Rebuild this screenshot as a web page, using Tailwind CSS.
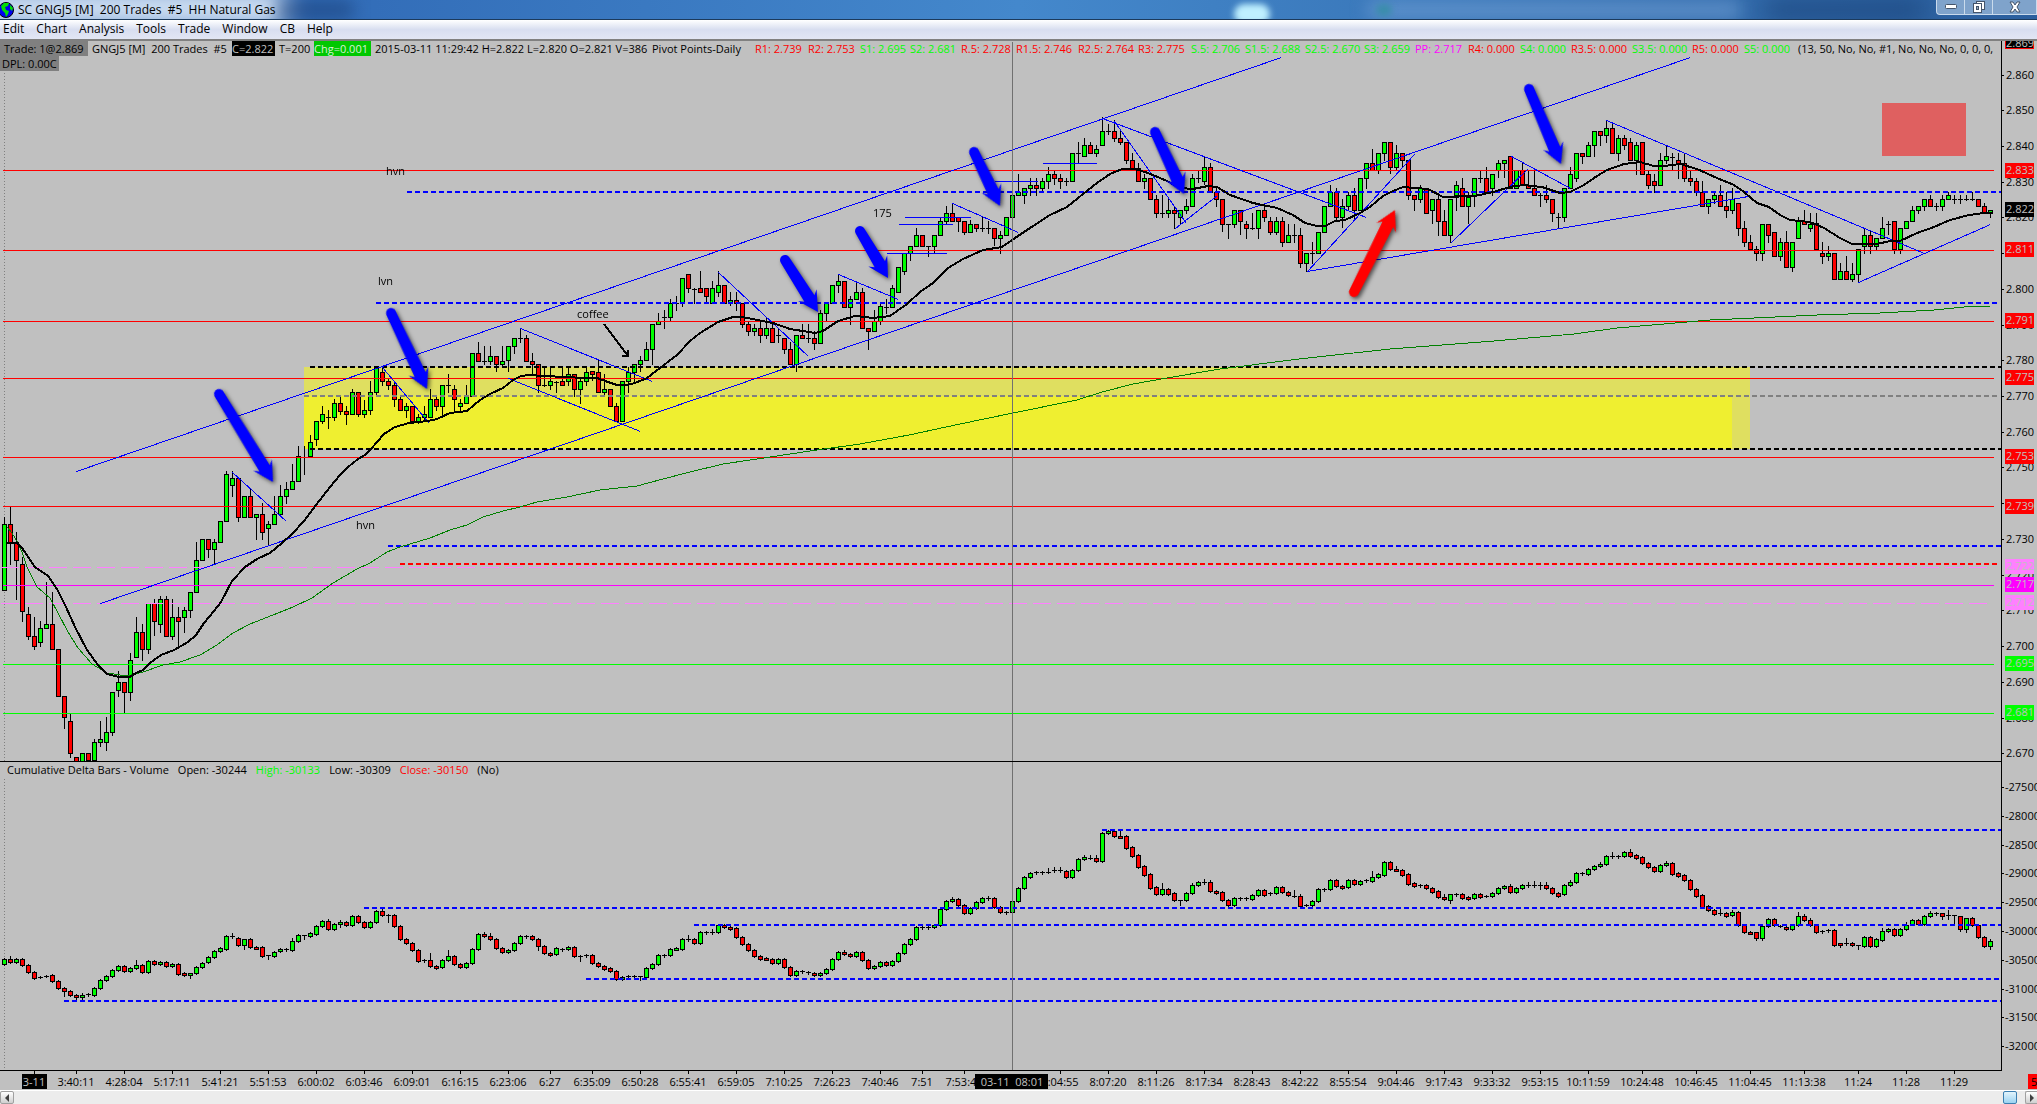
<!DOCTYPE html>
<html lang="en">
<head>
    <meta charset="UTF-8">
    <meta name="viewport" content="width=device-width, initial-scale=1.0">
    <title>SC GNGJ5 [M] 200 Trades #5 HH Natural Gas</title>
    <script src="https://cdn.jsdelivr.net/npm/@tailwindcss/browser@4"></script>
</head>
<body class="h-screen flex flex-col overflow-hidden bg-[#c0c0c0] text-black text-[11px] leading-[15px] font-['Open_Sans','Noto_Sans',sans-serif]">

    <!-- title bar -->
    <header class="relative h-5 shrink-0 flex items-center overflow-hidden border-b border-[#1c3a5c] bg-linear-to-r from-[#2a5fae] via-[#4488cc] to-[#2b5f9e]">
        <div class="absolute -left-10 -top-3 w-[330px] h-10 rounded-full bg-[#d3e2f4] blur-md"></div>
        <div class="absolute left-[275px] top-0 w-20 h-5 rounded-full bg-[#16396f]/50 blur-sm"></div>
        <div class="absolute left-[1234px] top-1 w-9 h-5 rounded-full bg-[#bff0ff] blur-[3px]"></div>
        <div class="absolute left-[1366px] top-0 w-[376px] h-5 rounded-full bg-[#6f9fd4]/60 blur-sm"></div>
        <div class="absolute left-[1376px] top-1 w-4 h-3 rounded-full bg-[#2f8f9f]/70 blur-[3px]"></div>
        <div class="absolute left-[1765px] top-0 w-40 h-5 bg-[#173f73]/70 blur-md"></div>
        <svg class="relative w-[14px] h-4 shrink-0" viewBox="0 0 14 16">
            <circle cx="6" cy="8" r="7.5" fill="#0000ee" stroke="#000"/>
            <path d="M1 4 L4 1 L9 1 L8 4 L5 5 L6 8 L9 9 L8 12 L6 15 L5 11 L2 8 Z" fill="#00e000"/>
            <path d="M10 3 L13 6 L12 9 L10 7 Z" fill="#00e000"/>
        </svg>
        <h1 class="relative ml-1 text-[12px] whitespace-pre">SC GNGJ5 [M]  200 Trades  #5  HH Natural Gas</h1>
        <div class="relative ml-auto h-[15px] -mt-[5px] flex border border-t-0 border-[#dce8f4]/80 rounded-bl bg-[#7fa3cb]">
            <button aria-label="Minimize" class="w-7 border-r border-[#dce8f4]/80 flex items-center justify-center">
                <svg class="w-3 h-1.5" viewBox="0 0 12 6"><rect x="0.5" y="0.5" width="11" height="4" rx="1" fill="#fff" stroke="#44546a"/></svg>
            </button>
            <button aria-label="Restore" class="w-7 border-r border-[#dce8f4]/80 flex items-center justify-center">
                <svg class="w-3 h-3" viewBox="0 0 12 12"><rect x="3.5" y="0.5" width="8" height="8" fill="#fff" stroke="#44546a"/><rect x="0.5" y="2.5" width="8" height="9" fill="#fff" stroke="#44546a"/><rect x="3.5" y="5.5" width="2" height="3" fill="#9ab" stroke="#44546a"/></svg>
            </button>
            <button aria-label="Close" class="w-[43px] flex items-center justify-center">
                <svg class="w-3 h-3" viewBox="0 0 12 12"><path d="M1 1 H4 L6 4 L8 1 H11 L8 6 L11 11 H8 L6 8 L4 11 H1 L4 6 Z" fill="#fff" stroke="#44546a"/></svg>
            </button>
        </div>
    </header>

    <!-- menu -->
    <nav class="h-[21px] shrink-0 flex items-center gap-3 pl-[3px] pb-0.5 text-[12px] border-b-2 border-[#808080] bg-linear-to-b from-white via-[#d8def0] to-[#e2e6f4]">
        <a href="#">Edit</a>
        <a href="#">Chart</a>
        <a href="#">Analysis</a>
        <a href="#">Tools</a>
        <a href="#">Trade</a>
        <a href="#">Window</a>
        <a href="#">CB</a>
        <a href="#">Help</a>
    </nav>

    <main class="flex-1 min-h-0 flex">
        <div class="flex-1 min-w-0 flex flex-col">
            <!-- price panel -->
            <section class="relative flex-[721] min-h-0 overflow-hidden border-b border-black">
                <svg id="price" class="absolute inset-0 w-full h-full" shape-rendering="crispEdges"></svg>
                <div class="relative flex whitespace-pre">
                    <span class="w-[88px] pl-1 bg-[#808080]">Trade: 1@2.869</span>
                    <span class="w-[144px] pl-1">GNGJ5 [M]  200 Trades  #5</span>
                    <span class="w-[43px] bg-black text-[#c0c0c0]">C=2.822</span>
                    <span class="w-[39px] pl-1">T=200</span>
                    <span class="w-[57px] bg-[#00c800] text-[#d8f0d8]">Chg=0.001</span>
                    <span class="w-[281px] pl-1">2015-03-11 11:29:42 H=2.822 L=2.820 O=2.821 V=386</span>
                    <span class="w-[103px]">Pivot Points-Daily</span>
                    <div id="pivots" class="flex"></div>
                    <span>(13, 50, No, No, #1, No, No, No, 0, 0, 0,</span>
                </div>
                <span class="relative block w-[59px] pl-0.5 bg-[#808080]">DPL: 0.00C</span>
            </section>
            <!-- cumulative delta panel -->
            <section class="relative flex-[309] min-h-0 overflow-hidden border-b border-black">
                <svg id="delta" class="absolute inset-0 w-full h-full" shape-rendering="crispEdges"></svg>
                <div class="relative flex gap-[9px] pl-[7px] whitespace-pre">
                    <span>Cumulative Delta Bars - Volume</span>
                    <span>Open: -30244</span>
                    <span class="text-[#00ff00]">High: -30133</span>
                    <span>Low: -30309</span>
                    <span class="text-[#ff0000]">Close: -30150</span>
                    <span>(No)</span>
                </div>
            </section>
        </div>
        <aside class="w-9 shrink-0 border-l border-black">
            <svg id="scale" class="w-full h-full"></svg>
        </aside>
    </main>

    <svg id="times" class="w-full h-[19px] shrink-0"></svg>

    <footer class="h-[14px] shrink-0 flex border-t border-white bg-[#ececec]">
        <button aria-label="Scroll left" class="w-[14px] border border-[#a0a0a0] rounded-[2px] bg-linear-to-b from-white to-[#d0d0d0] flex items-center justify-center">
            <svg class="w-1.5 h-2" viewBox="0 0 6 8"><path d="M5 0 L1 4 L5 8 Z" fill="#404040"/></svg>
        </button>
        <div class="ml-auto w-[14px] mr-2 border border-[#3c7fb1] rounded-[2px] bg-linear-to-b from-[#e3f4fc] to-[#9bd3f2]"></div>
        <button aria-label="Scroll right" class="w-3 border border-r-0 border-[#a0a0a0] rounded-l-[2px] bg-linear-to-b from-white to-[#d0d0d0] flex items-center justify-center">
            <svg class="w-1.5 h-2" viewBox="0 0 6 8"><path d="M1 0 L5 4 L1 8 Z" fill="#404040"/></svg>
        </button>
    </footer>

    <script>
        const UP = "#00ff00", DOWN = "#ff0000", BLUE = "#0000ff";

        // one token per bar: colour, high, body top, body bottom, low (low = body bottom when left out)
        const priceBars = `
g517,524,590 r507,524,542,564 r532,542,560,599 r557,564,611,621 r607,614,636,639 r617,636,646,649 g621,628,642,646 g582,624,628 r592,624,649 r649,649,696
r696,696,717,728 r714,721,753,757 r757,757,762 g753,753,762 r753,753,760 g739,742,760 g721,739,742,746 g717,732,742,750 g692,692,732,735 g671,682,690,696
r682,682,692,713 g653,660,692,700 g617,632,657 r624,632,649,660 g603,603,649,653 r599,603,621,635 g596,599,624,632 r596,599,636 g599,617,636,639 r607,617,621,647
g607,610,617,632 g592,592,610,617 g542,560,592 g539,539,560 r539,539,549,557 g539,542,549,564 g521,521,542 g471,474,521 g471,478,485,496 r477,478,517,521
g496,496,517 r489,496,517 g514,514,517,539 r503,514,532,539 g521,524,528,545 g496,514,524 g485,496,514 g482,489,496,503 g464,481,489 g446,456,481
d446,457,457,474 g435,442,456 g421,421,439,445 g406,414,421,423 d410,417,417,428 g399,403,417,420 r397,403,411,414 r406,411,414,424 g389,392,414 r392,392,414,416
g400,410,414,417 g381,392,410,414 g367,367,392,396 r366,372,381,385 r378,381,385,389 r381,385,399,406 r397,399,410 g403,406,410,417 r406,406,421 g414,417,421,423
g406,414,417,420 g389,399,417 r397,399,406,410 g385,385,406,414 d374,385,385,392 r385,389,399,410 g399,403,406,410 g385,396,403 g353,353,396 r342,353,361
d346,361,361,364 g346,356,361,364 r356,356,364,371 g346,361,364,367 g346,346,360,371 g338,338,346,353 d328,338,338,342 r335,338,361 r353,361,364,375 r364,364,385,392
d367,385,385,386 g367,381,385,389 d381,382,382,392 r367,381,385 g367,374,381,385 r374,374,389,396 g377,381,389,403 g367,372,381,385 r371,371,374,380 r360,372,392
g374,389,392,396 r389,389,406 r403,406,421 g381,381,421 g367,372,381,392 g364,364,372,381 g356,360,364,371 g342,349,360 g324,324,349,364 g313,321,324
d310,317,317,328 g299,303,317,321 d296,303,303,310 g278,278,303,306 r274,274,288,292 d288,289,289,303 r271,288,292 r288,288,296,302 g281,288,303 g271,285,292,296
r285,285,303 g292,300,303,305 r292,300,303,310 r303,303,324,327 r322,324,331,335 g324,328,331,335 r322,328,335,342 g317,328,335,338 r324,328,342 d328,335,335,342
r338,338,349,353 r342,349,364 g335,335,364,371 r324,335,338 d324,338,338,342 r331,338,343,349 g310,313,343 g303,303,313,321 g285,285,303 g274,281,285,292
r281,281,307 g296,299,307,324 g282,292,299 r288,292,328 r328,328,331,349 g310,321,331 g303,306,321,324 d299,307,307,313 g285,288,307 g267,267,292
g253,253,271,274 g246,246,253,260 g228,235,246 r235,235,246 d246,246,246,256 g235,235,246,253 g217,221,235 g206,213,221,224 r203,213,221 r217,217,221,231
r221,221,232,234 g220,224,232 r224,224,228,231 d217,228,228,231 d221,228,228,233 r228,228,238,245 g231,235,238,253 g217,217,235 g195,195,217 g174,192,195
g188,188,195,203 g178,185,188,195 r178,185,188,195 g178,181,188,191 g167,174,181,188 r171,174,178,184 r174,178,181,188 d178,181,181,185 g153,153,181 d142,153,153,163
g138,145,156 r142,145,153 g145,149,153,156 g117,131,145 d124,131,131,134 r120,131,138,141 r131,138,142,144 r142,142,160,163 r153,160,168 r163,168,181
g174,178,181,188 r178,178,199 r195,199,213,217 d195,213,213,217 g199,210,213,217 r206,210,213,228 g210,210,217,223 g199,206,210,213 g174,178,206 d170,178,178,182
g156,167,181,184 r163,167,192 r187,192,199,206 r199,199,224,231 d224,224,224,238 g210,210,224,227 r210,210,221,234 r221,224,228,238 d213,228,228,229 g210,210,228,238
r206,210,217,221 r217,221,232,234 g217,221,232,234 r217,221,242,246 g224,235,242 d224,235,235,242 r228,235,263,267 g253,253,263,271 d242,253,253,263 g232,232,253
g206,206,232 g185,192,206 r188,192,217,220 g199,206,217,227 g192,195,206,209 r188,195,210,220 g178,178,210 g163,163,178,188 r149,163,170 g153,153,170,173
g142,142,153,160 r142,142,167,173 g145,153,167,170 r153,153,160,166 r160,160,195,199 r195,195,199,210 g185,188,199,202 r189,189,213 g199,199,210,223 r195,199,221,235
r210,221,235 g199,199,235,242 g181,185,195,210 r178,188,206 g192,197,206,223 g178,178,195,206 d170,178,178,182 r167,178,192 g174,174,188,195 g160,163,170,177
g160,160,163,177 r156,156,188 g170,170,188 r163,170,185 r170,185,188 r170,188,195 d193,195,195,206 r185,195,199,202 r199,199,213,221 d213,217,217,228
g188,188,217,221 g167,174,188 g153,153,178,181 r153,153,156,163 g142,145,156 g131,131,145,156 r131,131,135,145 g120,128,135,142 r124,128,153 g135,138,153,160
r135,138,145,149 r138,142,160 g142,145,160,174 r142,142,174 r171,174,185,188 r174,181,185,192 g153,160,185 g145,156,160,163 d153,157,157,170 r153,160,163,178
r153,163,178,181 r170,178,181,185 r178,181,192,195 r181,192,206 g199,199,206,213 g192,195,199,203 r185,195,206 r192,206,210,217 g188,199,210,213 r203,203,228,235
r221,228,242,246 r235,242,249 r246,249,253,260 g224,224,253,260 r224,224,235,242 r232,232,256 g238,242,256,260 r231,242,267 g242,242,267,271 g217,221,238
r210,221,224 g213,224,228,231 r213,223,249 r242,253,256,263 g246,253,256,260 r253,253,279 g263,271,279 r256,271,279 g263,274,279,281 g249,249,274,282
g228,235,246,253 r231,235,246,253 g238,238,246,249 g217,228,238 d221,224,224,234 r221,221,249,253 g228,228,249,253 g221,221,228 g206,210,221 g206,206,210,213
g199,199,206,210 r195,199,206 d203,206,206,210 g195,199,206,210 g192,195,199 d195,199,199,203 d195,199,199,203 d195,199,199,200 d192,199,199,200 r199,199,206
r203,206,212 g210,210,213,217`;

        // delta bars: colour, body top, body bottom, then high and low where the wick is long; thirds of a pixel
        const deltaBars = `
g598,611 r598,605,588 g598,605 r598,614 r614,635 r635,653 d650,652 d647,649 r646,664 r664,683 r683,692,680,707 r692,704 r704,710,702,721 g704,710,700,720 d703,705 g685,704 g661,685 g649,661 g631,649 g619,631
r619,634 g625,634 g616,625,600 r616,635 g604,635 r604,611 g607,611 r607,619 g613,619 r613,641 r640,646 g640,646,638,654 g622,640 g610,622 g592,607 g574,592 g565,574 g529,566 d529,532,518 r535,556
g538,556,537,567 r538,560 r560,563 r562,587 d586,588,584,596 g575,587 g568,574 d567,569 g544,569,535 g526,544 d526,529,524,538 g520,529 g499,521 g484,499 r484,508,476 g493,508 g487,493,480,502 r487,496 g469,496 r469,487
r487,502 g487,502 g454,487 r454,466,445 d465,467,463,486 r466,499 r499,538 r538,550 r550,571 r571,604 d600,603 r601,619,579 r619,623 g601,622 g589,601,570 r589,613 r613,622 g610,622 g568,610 g523,568
r523,529,515 r529,536,518 r536,565 r565,577 g571,577 g550,571 g529,550 d528,531 r529,538 r538,559,534,569 r559,580 r580,584 g565,583 d567,569 g562,568 r562,587 d589,592,586,602 d586,588 r586,610 r610,619
r619,626 r625,634 r634,658 g650,658 d649,651 d649,651 d649,651,647,660 g625,650 g613,625 g586,613 d585,588 g568,586 g565,568 g538,566 d537,539,525 r538,548 g517,548 d516,518 d516,518,507 g496,517
r496,502 r502,506 r505,532 r532,553 r553,571 r571,587 r587,596 r595,598 r598,610 g598,610 r598,622 r622,646 g634,646 d634,636 d637,639 r638,646 g640,646 g628,640 g598,628 g577,598
r577,583,570 r583,589 g577,589 r577,601 r601,625 g619,625 g607,619 r607,616 g604,616 g580,604 g553,580 g538,553 g502,538 d501,503 d502,504 g496,502 g448,496 g424,448 g418,424,410 r418,436
r436,460 g445,460 g427,445 g415,427 d414,416,408 r415,442 r442,457 d456,458 g424,457 g385,424 g352,383 g340,352 d336,338 d336,338 d335,337,324 d331,333,321 d331,333,321 r334,350 g331,350 g298,331
g292,298,284 d293,295,284 r295,304,284 g220,304 g214,220,209 r214,227,209 r227,230,210 r229,263 r262,287 r286,320 r319,344 r343,383 r382,401 g388,401,369 r388,401 r400,421 d420,422,420,434 g400,421 g376,400,369 g367,376
d366,368,357 r367,392,360 r392,398 r397,421 r421,434 g415,434 d414,416 d415,417 g406,416 g391,406 r391,404 d400,402 g382,400 r382,397 r397,406 d407,409,390 r409,437,403 d434,436 g424,434 g388,424
d387,389 g361,388 r361,377 r379,383 g361,382 r361,371 g364,371 d361,363 g352,362,333 g343,352 g307,344 r307,328,302 r328,331,318 r331,344 r343,371 r370,377 d375,377 r376,385 r385,395 r394,412
r412,418,402 g403,419,402,429 d402,404 r403,413 r412,416 g403,415 r403,410 d407,409 g400,407 g385,400 g379,385 r379,395,371 g385,395 g376,385 d375,377,366 d375,377,363 d376,378,366,388 r376,385,366 r385,400 r400,407
g376,403 g367,376,360 g340,367 d340,342 g328,343 g319,328 g313,319,305 g289,313 d289,291,276 d289,291 g277,289 r277,287,267 r286,293 r292,310 r310,322 r322,334 g316,334 g310,316,302 r310,341 r340,347
r346,361 r361,388 r388,407 r406,440 r439,451 r451,461 d460,462,448 r460,467 g457,466,450 r457,494 r494,515 r515,518 r517,533,515,540 g499,533,497,540 g478,499 r478,496,474 d497,499 r500,508 g494,508 g469,494,456
r469,481,462 r481,494,474 r494,515 d514,516 d511,513 r511,554 r550,555,549,561 d549,551,534 r550,556 d556,558,555,567 g532,557 r532,557 g538,557 g514,539,504 g508,514 r508,524 g508,524 g496,508,486 g481,493 r481,491
g469,491 g460,469,452 d459,461 r460,467,459,476 d465,467,451,478 d466,468,465,490 r469,508,467,513 g475,508,474,516 r475,494,471 r494,530 r530,557 g542,557,536,567`;

        const redLevels = [170, 250, 321, 378, 457, 506];
        const trendLines = [
            [76, 471, 1281, 57], [100, 603, 1690, 57], [232, 472, 286, 521], [382, 367, 429, 423],
            [520, 328, 652, 381], [508, 378, 640, 431], [718, 272, 808, 356], [838, 274, 898, 299],
            [952, 203, 1018, 232], [904, 217, 970, 217], [898, 224, 952, 224], [886, 253, 946, 253],
            [994, 181, 1037, 181], [1042, 163, 1096, 163], [1102, 118, 1366, 217], [1114, 121, 1186, 223],
            [1175, 228, 1217, 195], [1307, 271, 1414, 154], [1307, 271, 1748, 196], [1451, 242, 1528, 168],
            [1511, 156, 1570, 188], [1606, 120, 1924, 253], [1858, 282, 1990, 224]
        ];
        const fastAverage = "6,543 17,543 22,548 35,567 48,576 53,583 58,591 66,607 75,627 87,650 98,665 107,674 119,677 130,677 136,673 143,670 150,663 161,655 174,650 188,642 196,635 204,623 214,611 221,602 232,581 245,567 257,559 270,553 282,543 293,533 304,521 316,505 330,487 340,475 348,467 358,459 365,455 371,449 384,434 395,427 409,423 428,421 437,419 450,413 467,411 480,400 490,394 503,388 513,380 521,376 530,375 543,376 567,377 583,378 597,378 608,382 617,385 627,385 635,383 647,378 660,368 677,355 690,341 700,333 718,322 733,317 743,317 757,320 773,323 790,329 815,333 823,331 838,321 855,316 873,318 890,316 907,304 920,292 933,283 948,268 963,259 983,250 1002,247 1012,240 1030,228 1050,215 1067,207 1083,194 1097,183 1110,174 1122,169 1135,169 1148,173 1167,181 1180,188 1193,189 1208,186 1217,187 1230,195 1253,203 1277,208 1293,215 1305,223 1317,226 1325,226 1335,221 1345,220 1360,213 1370,207 1383,196 1393,191 1403,187 1428,189 1443,197 1475,196 1493,192 1510,187 1523,185 1542,187 1560,193 1570,192 1584,185 1597,176 1607,170 1624,164 1640,162 1654,166 1664,166 1680,164 1697,169 1717,178 1734,185 1744,192 1757,203 1769,207 1780,215 1790,220 1810,222 1824,228 1840,238 1852,244 1877,244 1890,241 1900,241 1917,233 1934,227 1950,220 1969,215 1984,213 1992,213";
        const slowAverage = "7,527 12,533 18,543 22,552 27,567 37,587 50,598 58,613 68,632 78,648 92,664 107,673 127,676 143,672 163,665 180,662 200,655 217,645 233,633 250,624 273,615 293,607 312,598 333,583 357,569 370,563 387,552 400,547 430,538 450,530 467,525 483,517 503,511 520,507 537,502 567,497 600,490 637,486 663,479 690,472 723,464 757,459 810,451 860,444 909,435 960,424 1013,413 1077,400 1102,392 1133,384 1167,378 1220,369 1299,359 1390,349 1494,341 1517,339 1574,334 1617,328 1664,324 1710,320 1754,318 1817,315 1880,313 1934,310 1964,307 1990,306";
        const arrows = [
            [219, 394, 273, 482], [391, 313, 427, 389], [785, 260, 818, 312], [860, 231, 888, 278],
            [974, 152, 1000, 206], [1155, 132, 1184, 194], [1529, 89, 1561, 164]
        ];

        const rect = (x, y, w, h, fill) => `<rect x="${x}" y="${y}" width="${w}" height="${h}" fill="${fill}"/>`;
        const line = (x1, y1, x2, y2, color, extra = "") =>
            `<line x1="${x1 + 0.5}" y1="${y1 + 0.5}" x2="${x2 + 0.5}" y2="${y2 + 0.5}" stroke="${color}" ${extra}/>`;
        const dashed = (x, y, end, color) =>
            `<line x1="${x}" y1="${y}" x2="${end}" y2="${y}" stroke="${color}" stroke-width="2" stroke-dasharray="5 3"/>`;
        const label = (x, y, text, fill = "#000", anchor = "start") =>
            `<text x="${x}" y="${y}" fill="${fill}" text-anchor="${anchor}" xml:space="preserve">${text}</text>`;

        function candle(i, color, high, top, bottom, low) {
            const x = 4 + 6 * i;
            let out = rect(x, high, 1, Math.max(low - high + 1, 1), "#000");
            if (color === "d") return out + rect(x - 2, top, 5, Math.max(bottom - top, 1), "#000");
            out += rect(x - 2, top, 5, Math.max(bottom - top + 1, 3), "#000");
            return out + rect(x - 1, top + 1, 3, Math.max(bottom - top - 1, 1), color === "g" ? UP : DOWN);
        }

        function arrow([x1, y1, x2, y2], color) {
            const len = Math.hypot(x2 - x1, y2 - y1);
            const angle = Math.atan2(y2 - y1, x2 - x1) * 180 / Math.PI;
            const neck = len - 16;
            return `<path transform="translate(${x1} ${y1}) rotate(${angle})" fill="${color}"
                d="M0 -5 L${neck} -6 L${neck - 4} -11 L${len} 0 L${neck - 4} 11 L${neck} 6 L0 5 A5 5 0 0 1 0 -5 Z"/>`;
        }

        // price panel, 41px below the top of the window
        let out = rect(304, 367, 1446, 82, "#dfdf60") + rect(304, 396, 1428, 53, "#efef30") + rect(1882, 103, 84, 53, "#df6060");
        out += line(4, 72, 4, 761, "#808080", 'stroke-dasharray="1 2"');
        priceBars.trim().split(/\s+/).forEach((bar, i) => {
            const [high, top, bottom, low = bottom] = bar.slice(1).split(",").map(Number);
            out += candle(i, bar[0], high, top, bottom, low);
        });
        redLevels.forEach(y => out += line(2, y, 1993, y, "#ff0000"));
        out += line(2, 585, 1993, 585, "#ff00ff") + line(2, 664, 1993, 664, UP) + line(2, 713, 1993, 713, UP);
        out += line(0, 567, 1988, 567, "#ff80ff", 'stroke-dasharray="18 6"') + line(0, 603, 1988, 603, "#ff80ff", 'stroke-dasharray="18 6"');
        out += dashed(407, 192, 2001, BLUE) + dashed(376, 303, 1997, BLUE) + dashed(310, 367, 2001, "#000") + dashed(304, 396, 1997, "#808080")
            + dashed(310, 449, 2001, "#000") + dashed(388, 546, 2001, BLUE) + dashed(400, 564, 1997, "#ff0000");
        trendLines.forEach(l => out += line(...l, BLUE));
        out += `<polyline points="${slowAverage}" fill="none" stroke="#008000"/>`;
        out += `<polyline points="${fastAverage}" fill="none" stroke="#000" stroke-width="2" stroke-linejoin="round"/>`;
        out += line(1012, 41, 1012, 762, "#707070");
        out += `<path d="M604 324 L628 356 M622 356 H628 V350" fill="none" stroke="#000" stroke-width="2"/>`;
        out += `<g shape-rendering="auto" class="drop-shadow-[2px_2px_2px_rgba(0,0,0,0.6)]">${arrows.map(a => arrow(a, BLUE)).join("")}${arrow([1354, 292, 1395, 210], "#ff0000")}</g>`;
        out += label(386, 175, "hvn") + label(378, 285, "lvn") + label(577, 318, "coffee") + label(873, 217, "175") + label(356, 529, "hvn");
        document.getElementById("price").innerHTML = `<g transform="translate(0 -41)">${out}</g>`;

        // delta panel, 762px below the top of the window
        out = line(4, 778, 4, 1069, "#808080", 'stroke-dasharray="1 2"');
        deltaBars.trim().split(/\s+/).forEach((bar, i) => {
            const [top, bottom, high = top - 3, low = bottom + 3] = bar.slice(1).split(",").map(Number);
            const y = v => Math.round(760 + v / 3);
            out += candle(i, bar[0], y(high), y(top), y(bottom), y(low));
        });
        [[1102, 830], [364, 908], [694, 925], [586, 979], [64, 1001]].forEach(([x, y]) => out += dashed(x, y, 2001, BLUE));
        out += line(1012, 760, 1012, 1070, "#707070");
        document.getElementById("delta").innerHTML = `<g transform="translate(0 -762)">${out}</g>`;

        // right-hand scale
        const priceY = p => Math.round(171 + (2833 - p) * 3.572);
        out = "";
        for (let p = 2860; p >= 2670; p -= 10) {
            out += rect(0, priceY(p), 2, 1, "#000") + label(4, priceY(p) + 4, (p / 1000).toFixed(3));
        }
        const tag = (y, text, fill, color = "#c0c0c0") => rect(3, y - 8, 29, 15, fill) + label(4, y + 3, text, color);
        out += rect(3, 41, 29, 8, "#ff0000") + rect(4, 41, 27, 7, "#000") + label(4, 47, "2.869", "#c0c0c0");
        [2833, 2811, 2791, 2775, 2753, 2739].forEach(p => out += tag(priceY(p), (p / 1000).toFixed(3), "#ff0000"));
        out += tag(210, "2.822", "#000") + tag(567, "2.722", "#ff80ff") + tag(603, "2.712", "#ff80ff") + tag(585, "2.717", "#ff00ff")
            + tag(664, "2.695", UP) + tag(713, "2.681", UP);
        for (let i = 0; i < 10; i++) {
            const y = Math.round(787 + i * 28.8);
            out += rect(0, y, 2, 1, "#000") + label(3, y + 4, String(-27500 - i * 500));
        }
        document.getElementById("scale").innerHTML = `<g transform="translate(0 -41)">${out}</g>`;

        // time scale
        const times = { 76: "3:40:11", 124: "4:28:04", 172: "5:17:11", 220: "5:41:21", 268: "5:51:53", 316: "6:00:02", 364: "6:03:46", 412: "6:09:01", 460: "6:16:15", 508: "6:23:06", 550: "6:27", 592: "6:35:09", 640: "6:50:28", 688: "6:55:41", 736: "6:59:05", 784: "7:10:25", 832: "7:26:23", 880: "7:40:46", 922: "7:51", 964: "7:53:49", 1060: "8:04:55", 1108: "8:07:20", 1156: "8:11:26", 1204: "8:17:34", 1252: "8:28:43", 1300: "8:42:22", 1348: "8:55:54", 1396: "9:04:46", 1444: "9:17:43", 1492: "9:33:32", 1540: "9:53:15", 1588: "10:11:59", 1642: "10:24:48", 1696: "10:46:45", 1750: "11:04:45", 1804: "11:13:38", 1858: "11:24", 1906: "11:28", 1954: "11:29" };
        out = rect(34, 0, 1, 3, "#000");
        for (const x in times) out += rect(x, 0, 1, 3, "#000") + label(x, 15, times[x], "#000", "middle");
        out += rect(22, 3, 25, 15, "#000") + label(34, 15, "3-11", "#c0c0c0", "middle");
        out += rect(975, 3, 73, 15, "#000") + label(1012, 15, "03-11  08:01", "#c0c0c0", "middle");
        out += rect(2028, 3, 9, 15, "#ff0000") + label(2031, 15, "5", "#000");
        document.getElementById("times").innerHTML = out;

        // pivot read-outs in the header row
        const pivots = [["R1: 2.739", 53], ["R2: 2.753", 52], ["S1: 2.695", 50], ["S2: 2.681", 51], ["R.5: 2.728", 55], ["R1.5: 2.746", 62], ["R2.5: 2.764", 60], ["R3: 2.775", 53], ["S.5: 2.706", 54], ["S1.5: 2.688", 60], ["S2.5: 2.670", 59], ["S3: 2.659", 51], ["PP: 2.717", 53], ["R4: 0.000", 52], ["S4: 0.000", 51], ["R3.5: 0.000", 61], ["S3.5: 0.000", 60], ["R5: 0.000", 52], ["S5: 0.000", 54]];
        const pivotColor = { R: "text-[#ff0000]", S: "text-[#00ff00]", P: "text-[#ff00ff]" };
        document.getElementById("pivots").innerHTML = pivots.map(([text, width]) =>
            `<span class="${pivotColor[text[0]]}" style="width:${width}px">${text}</span>`).join("");
    </script>

</body>
</html>
